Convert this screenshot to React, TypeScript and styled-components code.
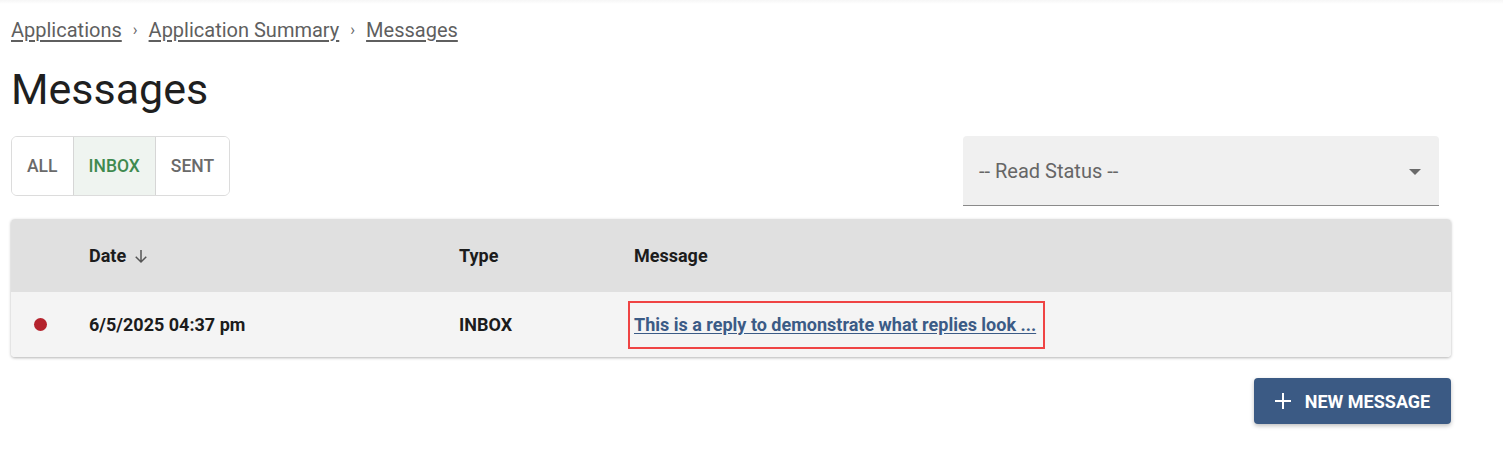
import React from 'react';
import styled, { createGlobalStyle } from 'styled-components';

const GlobalStyle = createGlobalStyle`
	body {
		margin: 0;
		background: #ffffff;
		font-family: Roboto, 'Liberation Sans', sans-serif;
		color: #212121;
	}
`;

const TopShade = styled.div`
	height: 4px;
	background: linear-gradient(#f6f6f6, #ffffff);
`;

const Page = styled.main`
	width: 1440px;
	padding: 12px 0 40px 11px;
	display: flex;
	flex-direction: column;
`;

const Crumbs = styled.nav`
	display: flex;
	align-items: center;
	gap: 11px;
	font-size: 20px;
	line-height: 28px;
	color: #5f5f5f;
`;

const Crumb = styled.a`
	color: #5f5f5f;
	text-decoration: underline;
	text-underline-offset: 3px;
	cursor: pointer;
`;

const Sep = styled.span`
	font-size: 16px;
	color: #666;
`;

const Title = styled.h1`
	margin: 19px 0 0;
	font-size: 43px;
	line-height: 52px;
	font-weight: 400;
	color: #1f1f1f;
`;

const Controls = styled.div`
	margin-top: 21px;
	display: flex;
	justify-content: space-between;
	align-items: flex-start;
	padding-right: 12px;
`;

const Toggle = styled.div`
	display: flex;
	height: 60px;
	border: 1px solid #dcdcdc;
	border-radius: 6px;
	overflow: hidden;
	box-sizing: border-box;
`;

const ToggleButton = styled.button<{ $active?: boolean }>`
	border: none;
	border-left: 1px solid #d6d6d6;
	background: ${(p) => (p.$active ? '#eff4f0' : '#ffffff')};
	color: ${(p) => (p.$active ? '#3f8a4f' : '#6a6a6a')};
	font-family: Roboto, 'Liberation Sans', sans-serif;
	font-size: 17.5px;
	font-weight: 500;
	padding: 0 15px;
	&:first-child {
		border-left: none;
	}
`;

const Select = styled.div`
	width: 476px;
	height: 70px;
	box-sizing: border-box;
	background: #f0f0f0;
	border-radius: 4px 4px 0 0;
	border-bottom: 1px solid #8a8a8a;
	display: flex;
	align-items: center;
	justify-content: space-between;
	padding: 0 18px 0 16px;
	font-size: 20px;
	color: #666666;
`;

const Caret = styled.span`
	width: 0;
	height: 0;
	border-left: 6px solid transparent;
	border-right: 6px solid transparent;
	border-top: 6px solid #6a6a6a;
	margin-top: 2px;
`;

const Table = styled.div`
	margin-top: 13px;
	border-radius: 4px;
	overflow: hidden;
	box-shadow: 0 1px 3px rgba(0, 0, 0, 0.3);
`;

const Row = styled.div<{ $head?: boolean }>`
	display: grid;
	grid-template-columns: 78px 370px 175px 1fr;
	align-items: center;
	height: ${(p) => (p.$head ? '73px' : '65px')};
	background: ${(p) => (p.$head ? '#e0e0e0' : '#f4f4f4')};
	font-size: 18px;
	font-weight: 700;
	color: #1c1c1c;
`;

const Cell = styled.div`
	display: flex;
	align-items: center;
	gap: 6px;
`;

const Dot = styled.span`
	width: 13px;
	height: 13px;
	border-radius: 50%;
	background: #b5232d;
	margin-left: 23px;
`;

const MessageLink = styled.a`
	margin-left: -6px;
	padding: 11px 7px 12px 4px;
	border: 2px solid #ef4444;
	color: #3b5b86;
	text-decoration: underline;
	text-underline-offset: 2px;
	cursor: pointer;
`;

const Actions = styled.div`
	margin-top: 21px;
	display: flex;
	justify-content: flex-end;
`;

const NewButton = styled.button`
	height: 46px;
	width: 197px;
	border: none;
	border-radius: 4px;
	background: #3b5a84;
	color: #ffffff;
	font-family: Roboto, 'Liberation Sans', sans-serif;
	font-size: 18px;
	font-weight: 700;
	display: flex;
	align-items: center;
	justify-content: center;
	gap: 14px;
	box-shadow: 0 2px 4px rgba(0, 0, 0, 0.25);
`;

const ArrowDown = () => (
	<svg width='18' height='18' viewBox='0 0 24 24' fill='none'>
		<path d='M12 4v16M5 13l7 7 7-7' stroke='#555' strokeWidth='2' />
	</svg>
);

const Plus = () => (
	<svg width='16' height='16' viewBox='0 0 16 16'>
		<path d='M8 0v16M0 8h16' stroke='#fff' strokeWidth='2' />
	</svg>
);

export default function App() {
	return (
		<>
			<GlobalStyle />
			<TopShade />
			<Page>
				<Crumbs>
					<Crumb>Applications</Crumb>
					<Sep>›</Sep>
					<Crumb>Application Summary</Crumb>
					<Sep>›</Sep>
					<Crumb>Messages</Crumb>
				</Crumbs>
				<Title>Messages</Title>
				<Controls>
					<Toggle>
						<ToggleButton>ALL</ToggleButton>
						<ToggleButton $active>INBOX</ToggleButton>
						<ToggleButton>SENT</ToggleButton>
					</Toggle>
					<Select>
						<span>-- Read Status --</span>
						<Caret />
					</Select>
				</Controls>
				<Table>
					<Row $head>
						<Cell />
						<Cell>
							Date <ArrowDown />
						</Cell>
						<Cell>Type</Cell>
						<Cell>Message</Cell>
					</Row>
					<Row>
						<Cell>
							<Dot />
						</Cell>
						<Cell>6/5/2025 04:37 pm</Cell>
						<Cell>INBOX</Cell>
						<Cell>
							<MessageLink>This is a reply to demonstrate what replies look ...</MessageLink>
						</Cell>
					</Row>
				</Table>
				<Actions>
					<NewButton>
						<Plus />
						NEW MESSAGE
					</NewButton>
				</Actions>
			</Page>
		</>
	);
}
